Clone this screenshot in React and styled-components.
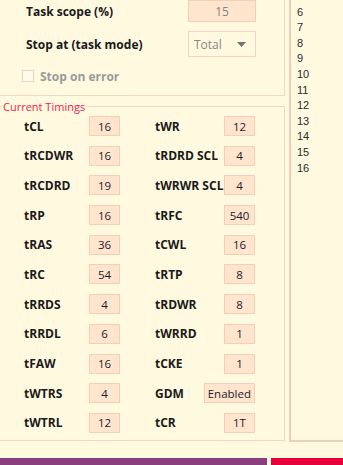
import React from "react";
import styled, { createGlobalStyle } from "styled-components";

const Global = createGlobalStyle`
  html, body { margin: 0; padding: 0; background: #FFF9E0; }
  body { font-family: "Open Sans", "Noto Sans", sans-serif; }
  * { box-sizing: border-box; }
`;

const Page = styled.div`
  width: 343px;
  height: 465px;
  overflow: hidden;
  background: #FFF9E0;
  display: flex;
  flex-direction: column;
`;

const Main = styled.div`
  display: flex;
  gap: 4px;
  height: 442px;
`;

const LeftCol = styled.div`
  width: 285px;
  display: flex;
  flex-direction: column;
`;

const TopPanel = styled.div`
  height: 96px;
  border-right: 1px solid #EFD9C4;
  border-bottom: 1px solid #EFD9C4;
  display: flex;
  flex-direction: column;
`;

const FieldRow = styled.div`
  display: flex;
  align-items: center;
  padding-left: 26px;
  height: ${(p) => p.$h}px;
  margin-top: ${(p) => p.$mt || 0}px;
`;

const BoldLabel = styled.span`
  font-weight: 700;
  font-size: 12px;
  color: ${(p) => (p.$disabled ? "#9A9A9A" : "#1A1A1A")};
  width: ${(p) => (p.$w ? `${p.$w}px` : "auto")};
  white-space: nowrap;
`;

const ScopeBox = styled.div`
  width: 68px;
  height: 100%;
  background: #FFE4CE;
  border: 1px solid #F2D0B8;
  display: flex;
  align-items: center;
  justify-content: center;
  font-size: 12px;
  color: #858585;
`;

const Select = styled.div`
  width: 68px;
  height: 100%;
  border: 1px solid #F2D6C2;
  display: flex;
  align-items: center;
  justify-content: space-between;
  padding: 0 9px 0 5px;
  font-size: 12px;
  color: #8E8585;
`;

const CheckRow = styled.div`
  display: flex;
  align-items: center;
  padding-left: 22px;
  gap: 6px;
  margin-top: 12px;
  height: 14px;
`;

const CheckBox = styled.span`
  width: 12px;
  height: 12px;
  border: 1px solid #E8D2C4;
  background: #FFFBEA;
`;

const Group = styled.fieldset`
  margin: 4px 0 0 0;
  padding: 3px 0 0 0;
  border: 1px solid #EFD9C4;
  border-left: none;
  height: 341px;
  min-width: 0;
`;

const Legend = styled.legend`
  margin-left: 2px;
  padding: 0 1px;
  font-size: 11px;
  line-height: 13px;
  color: #F0224E;
`;

const Grid = styled.div`
  display: grid;
  padding-left: 24px;
  grid-template-columns: 65px 66px 100px;
  grid-auto-rows: 20px;
  row-gap: 9.7px;
  align-items: center;
`;

const TLabel = styled.span`
  font-weight: 700;
  font-size: 12px;
  color: #1A1A1A;
  white-space: nowrap;
`;

const Pair = styled.div`
  display: flex;
  align-items: center;
  justify-content: space-between;
  height: 20px;
`;

const ValBox = styled.div`
  min-width: 31px;
  height: 20px;
  padding: 0 ${(p) => (p.$wide ? "3px" : "0")};
  background: #FFE4CE;
  border: 1px solid #F2D0B8;
  display: flex;
  align-items: center;
  justify-content: center;
  font-size: 11.5px;
  color: #1E1B2A;
  justify-self: start;
`;

const RightPanel = styled.div`
  flex: 1;
  border-left: 2px solid #EBCFBA;
  border-bottom: 2px solid #EBCFBA;
  padding: 4.6px 0 0 6px;
`;

const ListItem = styled.div`
  font-family: "Liberation Sans", Arial, sans-serif;
  font-size: 11px;
  line-height: 15.6px;
  color: #2A2A2A;
`;

const Footer = styled.div`
  display: flex;
  gap: 4px;
  margin-top: 16px;
  height: 7px;
`;

const Bar = styled.div`
  height: 100%;
  background: ${(p) => p.$c};
  width: ${(p) => (p.$w ? `${p.$w}px` : "auto")};
  flex: ${(p) => (p.$w ? "none" : 1)};
`;

const timings = [
  ["tCL", "16", "tWR", "12"],
  ["tRCDWR", "16", "tRDRD SCL", "4"],
  ["tRCDRD", "19", "tWRWR SCL", "4"],
  ["tRP", "16", "tRFC", "540"],
  ["tRAS", "36", "tCWL", "16"],
  ["tRC", "54", "tRTP", "8"],
  ["tRRDS", "4", "tRDWR", "8"],
  ["tRRDL", "6", "tWRRD", "1"],
  ["tFAW", "16", "tCKE", "1"],
  ["tWTRS", "4", "GDM", "Enabled"],
  ["tWTRL", "12", "tCR", "1T"],
];

export default function App() {
  return (
    <Page>
      <Global />
      <Main>
        <LeftCol>
          <TopPanel>
            <FieldRow $h={22}>
              <BoldLabel $w={162}>Task scope (%)</BoldLabel>
              <ScopeBox>15</ScopeBox>
            </FieldRow>
            <FieldRow $h={26} $mt={9}>
              <BoldLabel $w={162}>Stop at (task mode)</BoldLabel>
              <Select>
                <span>Total</span>
                <svg width="9" height="5" viewBox="0 0 9 5">
                  <path d="M0 0 L9 0 L4.5 5 Z" fill="#7A7070" />
                </svg>
              </Select>
            </FieldRow>
            <CheckRow>
              <CheckBox />
              <BoldLabel $disabled>Stop on error</BoldLabel>
            </CheckRow>
          </TopPanel>
          <Group>
            <Legend>Current Timings</Legend>
            <Grid>
              {timings.map(([l1, v1, l2, v2]) => (
                <React.Fragment key={l1}>
                  <TLabel>{l1}</TLabel>
                  <ValBox>{v1}</ValBox>
                  <Pair>
                    <TLabel>{l2}</TLabel>
                    <ValBox $wide={v2.length > 3}>{v2}</ValBox>
                  </Pair>
                </React.Fragment>
              ))}
            </Grid>
          </Group>
        </LeftCol>
        <RightPanel>
          {[6, 7, 8, 9, 10, 11, 12, 13, 14, 15, 16].map((n) => (
            <ListItem key={n}>{n}</ListItem>
          ))}
        </RightPanel>
      </Main>
      <Footer>
        <Bar $c="#8A3E7E" $w={267} />
        <Bar $c="#E8003D" />
      </Footer>
    </Page>
  );
}
